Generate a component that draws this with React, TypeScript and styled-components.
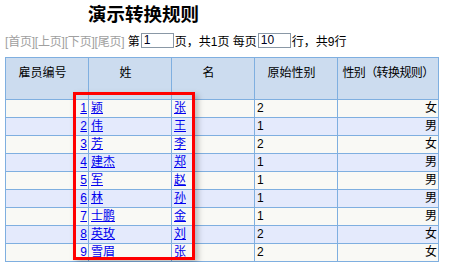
import styled, {createGlobalStyle} from "styled-components";

const GlobalStyle = createGlobalStyle`
    body {
        margin: 0;
        background: #ffffff;
        font-family: "Liberation Sans", "Noto Sans CJK SC", sans-serif;
        font-size: 12px;
        color: #000;
    }
`;

const Page = styled.div`
    padding: 2px 0 0 5px;
`;

const Title = styled.h2`
    margin: 0 0 0 83px;
    font-size: 18.5px;
    font-weight: bold;
    line-height: 22px;
    font-family: "Noto Sans CJK SC", sans-serif;
`;

const Pager = styled.div`
    display: flex;
    align-items: center;
    height: 16px;
    margin: 8px 0 9px;
    white-space: pre;
`;

const PageLink = styled.span`
    color: #a0a0a0;
    letter-spacing: -0.2px;
`;

const PageInput = styled.input`
    width: 33px;
    height: 15px;
    box-sizing: border-box;
    border: 1px solid #8a98a6;
    padding: 0 2px;
    margin: 0 1px 0 1px;
    font-family: "Liberation Sans", sans-serif;
    font-size: 12px;
    color: #002;
    background: #fff;
`;

const TableWrap = styled.div`
    position: relative;
    width: 434px;
`;

const Table = styled.table`
    border-collapse: collapse;
    table-layout: fixed;
    width: 434px;
    border: 1px solid #7fafe0;
`;

const Th = styled.th<{ $wide?: boolean }>`
    height: 36px;
    background: #ccdcef;
    border: 1px solid #7fafe0;
    font-weight: normal;
    vertical-align: top;
    padding: ${p => (p.$wide ? "5px 0 0 0" : "5px 9px 0 0")};
    letter-spacing: ${p => (p.$wide ? "-0.6px" : "0")};
    text-align: center;
    white-space: nowrap;
`;

const Tr = styled.tr<{ $alt: boolean }>`
    background: ${p => (p.$alt ? "#e4eafc" : "#f9f9f5")};
`;

const Td = styled.td<{ $align?: string }>`
    height: 17px;
    padding: 0 1px 0 2px;
    border: 1px solid #7fafe0;
    text-align: ${p => p.$align || "left"};
    line-height: 17px;
    white-space: nowrap;
`;

const Link = styled.a`
    color: #0000ee;
    text-decoration: underline;
`;

const Highlight = styled.div`
    position: absolute;
    left: 68px;
    top: 35px;
    width: 122px;
    height: 168px;
    box-sizing: border-box;
    border: 3px solid #ff0000;
    box-shadow: 3px 3px 6px rgba(0, 0, 0, 0.25);
    pointer-events: none;
`;

const rows = [
    {id: 1, first: "颖", last: "张", orig: 2, sex: "女"},
    {id: 2, first: "伟", last: "王", orig: 1, sex: "男"},
    {id: 3, first: "芳", last: "李", orig: 2, sex: "女"},
    {id: 4, first: "建杰", last: "郑", orig: 1, sex: "男"},
    {id: 5, first: "军", last: "赵", orig: 1, sex: "男"},
    {id: 6, first: "林", last: "孙", orig: 1, sex: "男"},
    {id: 7, first: "士鹏", last: "金", orig: 1, sex: "男"},
    {id: 8, first: "英玫", last: "刘", orig: 2, sex: "女"},
    {id: 9, first: "雪眉", last: "张", orig: 2, sex: "女"},
];

export default function App() {
    return (
        <>
            <GlobalStyle/>
            <Page>
                <Title>演示转换规则</Title>
                <Pager>
                    <PageLink>[首页][上页][下页][尾页]</PageLink>
                    <span> 第</span>
                    <PageInput defaultValue="1"/>
                    <span>页，共1页 每页</span>
                    <PageInput defaultValue="10"/>
                    <span>行，共9行</span>
                </Pager>
                <TableWrap>
                    <Table>
                        <colgroup>
                            <col style={{width: 83}}/>
                            <col style={{width: 83}}/>
                            <col style={{width: 83}}/>
                            <col style={{width: 83}}/>
                            <col/>
                        </colgroup>
                        <thead>
                        <tr>
                            <Th>雇员编号</Th>
                            <Th>姓</Th>
                            <Th>名</Th>
                            <Th>原始性别</Th>
                            <Th $wide>性别（转换规则）</Th>
                        </tr>
                        </thead>
                        <tbody>
                        {rows.map((r, i) => (
                            <Tr key={r.id} $alt={i % 2 === 1}>
                                <Td $align="right"><Link href="#">{r.id}</Link></Td>
                                <Td><Link href="#">{r.first}</Link></Td>
                                <Td><Link href="#">{r.last}</Link></Td>
                                <Td>{r.orig}</Td>
                                <Td $align="right">{r.sex}</Td>
                            </Tr>
                        ))}
                        </tbody>
                    </Table>
                    <Highlight/>
                </TableWrap>
            </Page>
        </>
    );
}
